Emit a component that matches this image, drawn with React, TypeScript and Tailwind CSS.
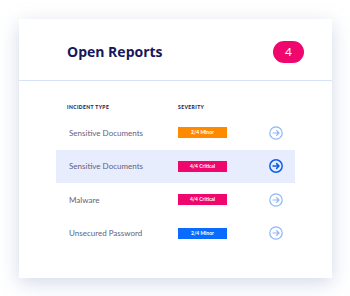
const rows = [
  { name: 'Sensitive Documents', label: '2/4 Minor', color: 'bg-[#ff8a00]', active: false },
  { name: 'Sensitive Documents', label: '4/4 Critical', color: 'bg-[#f0076e]', active: true },
  { name: 'Malware', label: '4/4 Critical', color: 'bg-[#f0076e]', active: false },
  { name: 'Unsecured Password', label: '2/4 Minor', color: 'bg-[#0a6cff]', active: false },
];

function Arrow({ active }: { active: boolean }) {
  const c = active ? '#0b5fe6' : '#8db6f7';
  return (
    <svg width="14" height="14" viewBox="0 0 14 14" fill="none">
      <circle cx="7" cy="7" r="6.2" stroke={c} strokeWidth={active ? 1.5 : 1.2} />
      <path d="M4 7h5.8M7.6 4.6 10 7l-2.4 2.4" stroke={c} strokeWidth={active ? 1.5 : 1.2} strokeLinecap="round" strokeLinejoin="round" />
    </svg>
  );
}

export default function App() {
  return (
    <div className="w-[350px] h-[296px] bg-white pt-[19px] pl-[19px] font-['Lato',sans-serif]">
      <div className="w-[313px] h-[259px] bg-white shadow-[0_5px_18px_rgba(130,150,190,0.35)] flex flex-col">
        <div className="h-[62px] flex items-center justify-between pl-[48px] pr-[28px] pt-[4px] border-b border-[#d7e4f6]">
          <span className="text-[14px] font-bold text-[#17175a] mt-[-1px] font-['Open_Sans',sans-serif]">Open Reports</span>
          <span className="w-[31px] h-[22px] rounded-full bg-[#f0076e] text-white text-[12px] flex items-center justify-center">4</span>
        </div>
        <div className="px-[37px] pt-[21px]">
          <div className="flex items-center h-[12px] text-[5px] font-black tracking-[0.08em] text-[#1e1e4e]">
            <span className="pl-[11px] w-[122px]">INCIDENT TYPE</span>
            <span>SEVERITY</span>
          </div>
          <div className="mt-[2px]">
            {rows.map((r, i) => (
              <div key={i} className={`flex items-center h-[33.5px] ${r.active ? 'bg-[#e8edfd]' : ''}`}>
                <span className="pl-[13px] w-[122px] text-[8px] text-[#5f5f80]">{r.name}</span>
                <span className={`w-[49px] h-[11px] ${r.color} text-white text-[5px] font-bold flex items-center justify-center`}>{r.label}</span>
                <span className="ml-[42px] flex items-center"><Arrow active={r.active} /></span>
              </div>
            ))}
          </div>
        </div>
      </div>
    </div>
  );
}
